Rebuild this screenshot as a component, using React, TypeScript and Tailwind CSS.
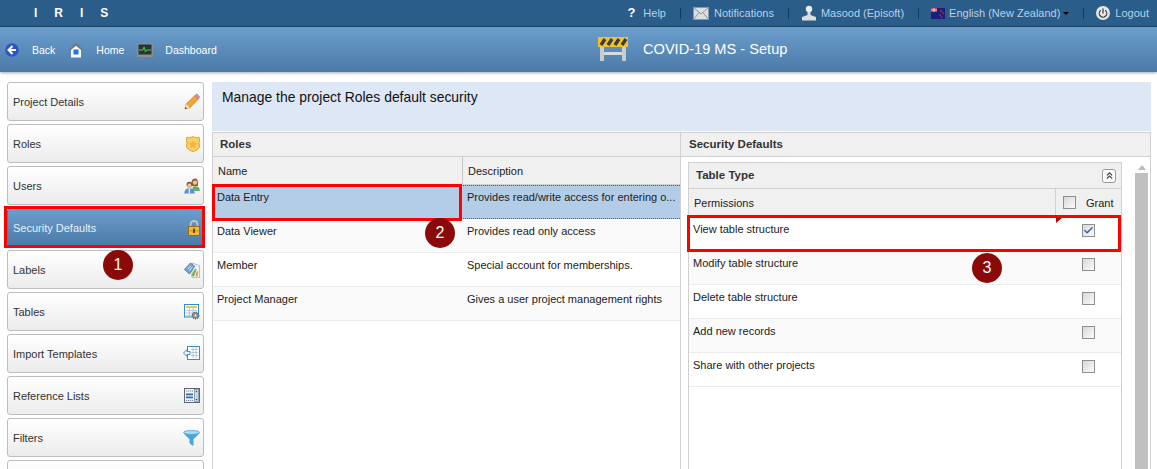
import React from 'react';
import { Check, ChevronsUp, Power } from 'lucide-react';

const Pencil = () => (
  <svg width="16" height="17" viewBox="0 0 16 17">
    <path d="M1 16 L2.2 11 L11 2.5 L14.5 6 L5.8 14.8 Z" fill="#f2a534" stroke="#cf7f1c" strokeWidth="0.8" />
    <path d="M11 2.5 L12.8 0.8 L15.6 3.6 L14.5 6 Z" fill="#c48fbd" stroke="#a06f9b" strokeWidth="0.5" />
    <path d="M1 16 L2.2 11 L5.8 14.8 Z" fill="#f6dfb8" />
    <path d="M1 16 L1.5 14 L3 15.5 Z" fill="#333" />
  </svg>
);
const Badge = () => (
  <svg width="14" height="16" viewBox="0 0 14 16">
    <path d="M1 1 C3 2 5 1.6 7 0.6 C9 1.6 11 2 13 1 L13.6 4 L13 7 L13.6 11 L11 14 L7 15.5 L3 14 L0.4 11 L1 7 L0.4 4 Z" fill="#f7cf63" stroke="#e0a636" />
    <path d="M7 4 L8.4 7 L11.4 7.3 L9.2 9.3 L9.8 12.2 L7 10.7 L4.2 12.2 L4.8 9.3 L2.6 7.3 L5.6 7 Z" fill="#eeb545" />
  </svg>
);
const UsersIcon = () => (
  <svg width="16" height="16" viewBox="0 0 16 16">
    <path d="M7.5 5 C7.5 2 9 0.6 11 0.6 C13 0.6 14 2.5 14 5 L14 8 H8 Z" fill="#9a5a34" />
    <circle cx="11" cy="4.6" r="2.2" fill="#eec39a" />
    <path d="M8.5 13 V9.5 C9 8 13 8 14 9 C15.5 9.5 15.8 11 15.8 13 Z" fill="#62b070" />
    <circle cx="5.4" cy="6.6" r="2.8" fill="#6e4a30" />
    <circle cx="5.4" cy="7.2" r="2" fill="#eec39a" />
    <path d="M0.3 15.6 C0.5 11.5 2.4 10.2 5.4 10.2 C8.4 10.2 10.4 11.5 10.6 15.6 Z" fill="#5b91d2" />
    <path d="M4.6 10.2 H6.2 L6 15.6 H4.8 Z" fill="#eaf2fb" />
  </svg>
);
const Lock = () => (
  <svg width="12" height="16" viewBox="0 0 12 16">
    <path d="M2.6 7 V4.4 C2.6 2.2 4 1 6 1 C8 1 9.4 2.2 9.4 4.4 V7" fill="none" stroke="#c4c4c4" strokeWidth="1.8" />
    <rect x="0.5" y="6.5" width="11" height="9" fill="#eebb3e" stroke="#9c6b16" />
    <rect x="1.5" y="10" width="9" height="1.5" fill="#d79a25" />
    <rect x="5" y="8.6" width="2" height="4.4" fill="#6e470c" />
  </svg>
);
const LabelsIcon = () => (
  <svg width="16" height="16" viewBox="0 0 16 16">
    <path d="M8 1 L15.5 3.5 L15.5 15.5 L8 15.5 Z" fill="#eff0f1" stroke="#a6a9ac" strokeWidth="0.7" />
    <path d="M0.4 7.6 L6.4 1 L10.8 4.2 L5.5 12 Z" fill="#6aa6da" stroke="#55585c" strokeWidth="0.6" />
    <path d="M3.8 7 L6.8 3.8 M5.4 8.6 L8.4 5.2" stroke="#dcecf8" strokeWidth="1" />
    <path d="M7.2 13.8 L11 6.6 L12.6 7.6 L10 14.4 Z" fill="#6fb55d" />
    <path d="M11.4 14.2 L13 9 L14.2 9.6 L13.6 14.6 Z" fill="#de9a37" />
  </svg>
);
const TablesIcon = () => (
  <svg width="16" height="16" viewBox="0 0 16 16">
    <rect x="0.5" y="0.5" width="14" height="12.5" fill="#f9fcff" stroke="#2f8fc4" />
    <rect x="2" y="2" width="11" height="2" fill="#f2c45a" />
    <path d="M2 6.5 H13 M2 9 H13 M2 11.5 H13 M5.5 4 V13 M9 4 V13" stroke="#a9bccb" strokeWidth="0.8" />
    <circle cx="11.5" cy="11.5" r="3.2" fill="#8e9194" stroke="#64676a" strokeWidth="1.4" strokeDasharray="1.3 0.8" />
    <circle cx="11.5" cy="11.5" r="1.1" fill="#efefef" />
  </svg>
);
const ImportIcon = () => (
  <svg width="17" height="15" viewBox="0 0 17 15">
    <rect x="4.5" y="0.5" width="12" height="13" fill="#fff" stroke="#3a8dbd" />
    <path d="M8 3.5 H15 M8 6.5 H15 M8 9.5 H15 M10 1 V12 M13 1 V12" stroke="#a9bfd0" strokeWidth="0.8" />
    <path d="M0.5 7 L4 3.5 V5.5 H7 V8.5 H4 V10.5 Z" fill="#eef6fc" stroke="#2e86c1" strokeWidth="0.9" />
  </svg>
);
const RefIcon = () => (
  <svg width="16" height="15" viewBox="0 0 16 15">
    <rect x="0.5" y="0.5" width="15" height="14" fill="#f3f5f7" stroke="#5c6570" />
    <rect x="2" y="5.5" width="7" height="1.8" fill="#2f6fae" />
    <rect x="2" y="8.5" width="7" height="1.8" fill="#2f6fae" />
    <path d="M2 3 H9 M2 12.5 H9" stroke="#7a828a" strokeDasharray="1.2 0.8" />
    <rect x="10.5" y="1.5" width="4" height="12" fill="#c4d9ec" stroke="#69737d" strokeWidth="0.6" />
    <path d="M11.5 4 L12.5 2.8 L13.5 4 Z M11.5 11 L12.5 12.2 L13.5 11 Z" fill="#333" />
  </svg>
);
const Funnel = () => (
  <svg width="17" height="16" viewBox="0 0 17 16">
    <ellipse cx="8.5" cy="2.5" rx="8" ry="2" fill="#a9dcf5" stroke="#3d95cf" strokeWidth="0.7" />
    <path d="M0.5 2.5 C2 6 6 8 6.5 9.5 V13 L9 15.5 L10.5 15.5 V9.5 C11 8 15 6 16.5 2.5 C14 5 3 5 0.5 2.5 Z" fill="#4ba5dc" />
  </svg>
);

const navItems: { label: string; icon?: React.ReactNode; active?: boolean }[] = [
  { label: 'Project Details', icon: <Pencil /> },
  { label: 'Roles', icon: <Badge /> },
  { label: 'Users', icon: <UsersIcon /> },
  { label: 'Security Defaults', icon: <Lock />, active: true },
  { label: 'Labels', icon: <LabelsIcon /> },
  { label: 'Tables', icon: <TablesIcon /> },
  { label: 'Import Templates', icon: <ImportIcon /> },
  { label: 'Reference Lists', icon: <RefIcon /> },
  { label: 'Filters', icon: <Funnel /> },
  { label: '' },
];

const roles = [
  { name: 'Data Entry', desc: 'Provides read/write access for entering o...', selected: true },
  { name: 'Data Viewer', desc: 'Provides read only access', bg: 'bg-[#fafafa]' },
  { name: 'Member', desc: 'Special account for memberships.', bg: 'bg-white' },
  { name: 'Project Manager', desc: 'Gives a user project management rights', bg: 'bg-[#fafafa]' },
];

const perms = [
  { name: 'View table structure', checked: true, bg: 'bg-white' },
  { name: 'Modify table structure', bg: 'bg-[#fafafa]' },
  { name: 'Delete table structure', bg: 'bg-white' },
  { name: 'Add new records', bg: 'bg-[#fafafa]' },
  { name: 'Share with other projects', bg: 'bg-white' },
];

const Box = ({ checked }: { checked?: boolean }) => (
  <span className="flex h-[13px] w-[13px] items-center justify-center border border-[#8f8f8f] bg-gradient-to-br from-[#d8d8d8] to-[#fbfbfb]">
    {checked && <Check size={11} strokeWidth={3} className="text-[#3b5ea8]" />}
  </span>
);

const Sep = () => <span className="ml-[14px] mr-[12px] h-[11px] w-px bg-[#123a5c]" />;

const Marker = ({ n, className }: { n: number; className: string }) => (
  <div className={`absolute flex h-[30px] w-[30px] items-center justify-center rounded-full bg-[#8a0a0a] text-[16px] text-white ${className}`}>
    {n}
  </div>
);

export default function App() {
  return (
    <div className="relative h-[469px] w-[1157px] overflow-hidden bg-white font-['Liberation_Sans',Arial,sans-serif] text-[11px] text-[#222]">
      {/* top bar */}
      <div className="flex h-[27px] items-center justify-between border-b border-[#1d4a70] bg-[#2a5d8a] pr-[8px] text-[#b9d0e6]">
        <div className="ml-[34px] flex gap-[17px] text-[12px] font-bold text-white">
          <span>I</span><span>R</span><span>I</span><span>S</span>
        </div>
        <div className="flex items-center">
          <span className="mr-[8px] text-[13px] font-bold text-white">?</span>
          <span>Help</span>
          <Sep />
          <svg width="16" height="13" viewBox="0 0 16 13" className="mr-[5px]">
            <rect x="0.5" y="0.5" width="15" height="12" fill="#dcdfe2" stroke="#8d97a1" />
            <path d="M0.5 0.5 L8 7 L15.5 0.5 M0.5 12.5 L6 5.5 M15.5 12.5 L10 5.5" fill="none" stroke="#8d97a1" />
          </svg>
          <span>Notifications</span>
          <Sep />
          <svg width="16" height="16" viewBox="0 0 16 16" className="mr-[4px]">
            <circle cx="8" cy="4" r="3.2" fill="#eee" />
            <path d="M6.5 7 H9.5 V10 L15 12 V15.5 H1 V12 L6.5 10 Z" fill="#ddd" />
          </svg>
          <span>Masood (Episoft)</span>
          <Sep />
          <svg width="14" height="11" viewBox="0 0 14 11" className="mr-[4px]">
            <rect width="14" height="11" fill="#1b1f7a" />
            <rect width="6" height="4" fill="#c8405a" />
            <path d="M0 2 H6 M3 0 V4" stroke="#eee" strokeWidth="0.8" />
            <circle cx="10" cy="3" r="0.8" fill="#e33" />
            <circle cx="12" cy="5" r="0.8" fill="#e33" />
            <circle cx="9" cy="7" r="0.8" fill="#e33" />
            <circle cx="10.5" cy="9" r="0.8" fill="#e33" />
          </svg>
          <span>English (New Zealand)</span>
          <span className="ml-[3px] h-0 w-0 border-x-[3px] border-t-[3px] border-x-transparent border-t-black" />
          <Sep />
          <span className="mr-[5px] flex h-[14px] w-[14px] items-center justify-center rounded-full bg-[#e6e6e6]">
            <Power size={10} strokeWidth={3} className="text-[#444]" />
          </span>
          <span>Logout</span>
        </div>
      </div>

      {/* second bar */}
      <div className="relative flex h-[45px] items-center bg-gradient-to-b from-[#6c9ecd] to-[#4a7aa8] pl-[5px] text-[10.5px] text-white shadow-[0_1px_3px_rgba(0,0,0,0.35)]">
        <svg width="14" height="14" viewBox="0 0 14 14">
          <circle cx="7" cy="7" r="6.8" fill="#2d55c4" />
          <path d="M7.5 3 L3.5 7 L7.5 11 M4 7 H11" stroke="#fff" strokeWidth="2" fill="none" />
        </svg>
        <span className="ml-[13px] pt-[2px]">Back</span>
        <svg width="16" height="16" viewBox="0 0 16 16" className="ml-[13px]">
          <path d="M0.5 8 L8 0.8 L15.5 8 L13.5 8.5 L8 3.8 L2.5 8.5 Z" fill="#6e7780" />
          <path d="M3 8 L8 3.8 L13 8 V15.5 H3 Z" fill="#fafafa" />
          <rect x="5.5" y="7.5" width="5" height="5" fill="#1e78e0" />
        </svg>
        <span className="ml-[12px] pt-[2px]">Home</span>
        <svg width="16" height="14" viewBox="0 0 16 14" className="ml-[13px]">
          <rect width="16" height="14" fill="#8b8f92" />
          <rect x="1.5" y="1.5" width="13" height="10" fill="#2e3234" />
          <path d="M2 7 H6 L7 4 L8.5 9 L9.5 7 H14" stroke="#35d84a" fill="none" />
        </svg>
        <span className="ml-[12px] pt-[2px]">Dashboard</span>
        <div className="absolute left-[598px] top-[10px] flex items-center text-[14.6px]">
          <svg width="30" height="24" viewBox="0 0 30 24">
            <rect x="2" y="8" width="4" height="16" fill="#c9cdd0" />
            <rect x="24" y="8" width="4" height="16" fill="#c9cdd0" />
            <rect x="6" y="15" width="18" height="3" fill="#d8dadc" />
            <rect x="0" y="0" width="30" height="10" fill="#f3c224" />
            <path d="M3 8 L7 2 M10 8 L14 2 M17 8 L21 2 M24 8 L28 2" stroke="#3c3c44" strokeWidth="3.4" />
          </svg>
          <span className="ml-[15px] pt-[2px]">COVID-19 MS - Setup</span>
        </div>
      </div>

      <div className="flex">
        {/* sidebar */}
        <nav className="ml-[7px] mt-[10px] flex w-[197px] shrink-0 flex-col gap-[3px]">
          {navItems.map((item, i) => (
            <div
              key={i}
              className={`flex h-[39px] shrink-0 items-center justify-between rounded-[3px] border pl-[5px] pr-[3px] ${
                item.active
                  ? 'border-[#4a7aa8] bg-gradient-to-b from-[#6c9ecd] to-[#4a7aa8] text-[#e8f0f8]'
                  : 'border-[#bdbdbd] bg-gradient-to-b from-white to-[#ececec] text-[#333]'
              }`}
            >
              <span className="pt-[2px]">{item.label}</span>
              {item.icon}
            </div>
          ))}
        </nav>

        {/* content */}
        <main className="ml-[8px] mt-[10px] w-[939px]">
          <div className="h-[49px] bg-[#dee7f6] pl-[10px] pt-[5px] text-[13.9px] text-[#111]">
            Manage the project Roles default security
          </div>
          <div className="mt-px flex h-[340px]">
            {/* roles */}
            <section className="w-[469px] border border-[#d0d0d0]">
              <div className="flex h-[24px] items-center border-b border-[#d0d0d0] bg-[#f0f0f0] pl-[7px] text-[11.5px] font-bold text-[#333]">Roles</div>
              <div className="flex h-[28px] border-b border-[#d0d0d0] bg-[#f0f0f0]">
                <div className="flex w-[250px] items-center border-r border-[#c8c8c8] pl-[5px] pt-[2px]">Name</div>
                <div className="flex items-center pl-[5px] pt-[2px]">Description</div>
              </div>
              {roles.map((r) => (
                <div key={r.name} className={`flex h-[34px] ${r.selected ? 'bg-[#b3cde6]' : `border-b border-[#ececec] ${r.bg}`}`}>
                  <div className="w-[250px] pl-[4px] pt-[4px]">{r.name}</div>
                  <div className={`flex-1 whitespace-nowrap pl-[4px] ${r.selected ? 'border-y border-dotted border-[#555] pt-[3px]' : 'pt-[4px]'}`}>{r.desc}</div>
                </div>
              ))}
            </section>

            {/* security defaults */}
            <section className="w-[470px] border border-l-0 border-[#d0d0d0]">
              <div className="flex h-[24px] items-center border-b border-[#d0d0d0] bg-[#f0f0f0] pl-[8px] text-[11.5px] font-bold text-[#333]">Security Defaults</div>
              <div className="flex">
                <div className="ml-[7px] mt-[5px] h-[321px] w-[434px] border border-[#d0d0d0]">
                  <div className="flex h-[26px] items-center justify-between border-b border-[#d0d0d0] bg-[#f0f0f0] pl-[7px] pr-[5px] text-[11.5px] font-bold text-[#333]">
                    <span>Table Type</span>
                    <span className="flex h-[14px] w-[14px] items-center justify-center rounded-[3px] border border-[#999] bg-white">
                      <ChevronsUp size={11} strokeWidth={2.5} className="text-[#444]" />
                    </span>
                  </div>
                  <div className="flex h-[28px] border-b border-[#d0d0d0] bg-[#f0f0f0]">
                    <div className="flex w-[367px] items-center border-r border-[#d0d0d0] pl-[5px] pt-[2px]">Permissions</div>
                    <div className="flex items-center pl-[7px]">
                      <Box />
                      <span className="ml-[10px] pt-[2px]">Grant</span>
                    </div>
                  </div>
                  {perms.map((p) => (
                    <div key={p.name} className={`flex h-[34px] border-b border-[#ececec] ${p.bg}`}>
                      <div className="w-[367px] pl-[4px] pt-[4px]">{p.name}</div>
                      <div className="pl-[26px] pt-[7px]"><Box checked={p.checked} /></div>
                    </div>
                  ))}
                </div>
                <div className="ml-[13px] mt-[6px] w-[13px]">
                  <div className="mx-auto mt-[2px] h-0 w-0 border-x-[4px] border-b-[5px] border-x-transparent border-b-[#bbb]" />
                  <div className="mt-[3px] h-[310px] bg-[#c0c0c0]" />
                </div>
              </div>
            </section>
          </div>
        </main>
      </div>

      {/* annotations */}
      <div className="absolute left-[4px] top-[206px] h-[42px] w-[201px] border-[3px] border-[#ff0000]" />
      <div className="absolute left-[212px] top-[184px] h-[37px] w-[250px] border-[3px] border-[#ff0000]" />
      <div className="absolute left-[687px] top-[215px] h-[37px] w-[434px] border-[3px] border-[#ff0000]" />
      <div className="absolute left-[1056px] top-[218px] h-0 w-0 border-r-[6px] border-t-[5px] border-r-transparent border-t-[#c00000]" />
      <Marker n={1} className="left-[103px] top-[250px]" />
      <Marker n={2} className="left-[425px] top-[218px]" />
      <Marker n={3} className="left-[972px] top-[253px]" />
    </div>
  );
}
